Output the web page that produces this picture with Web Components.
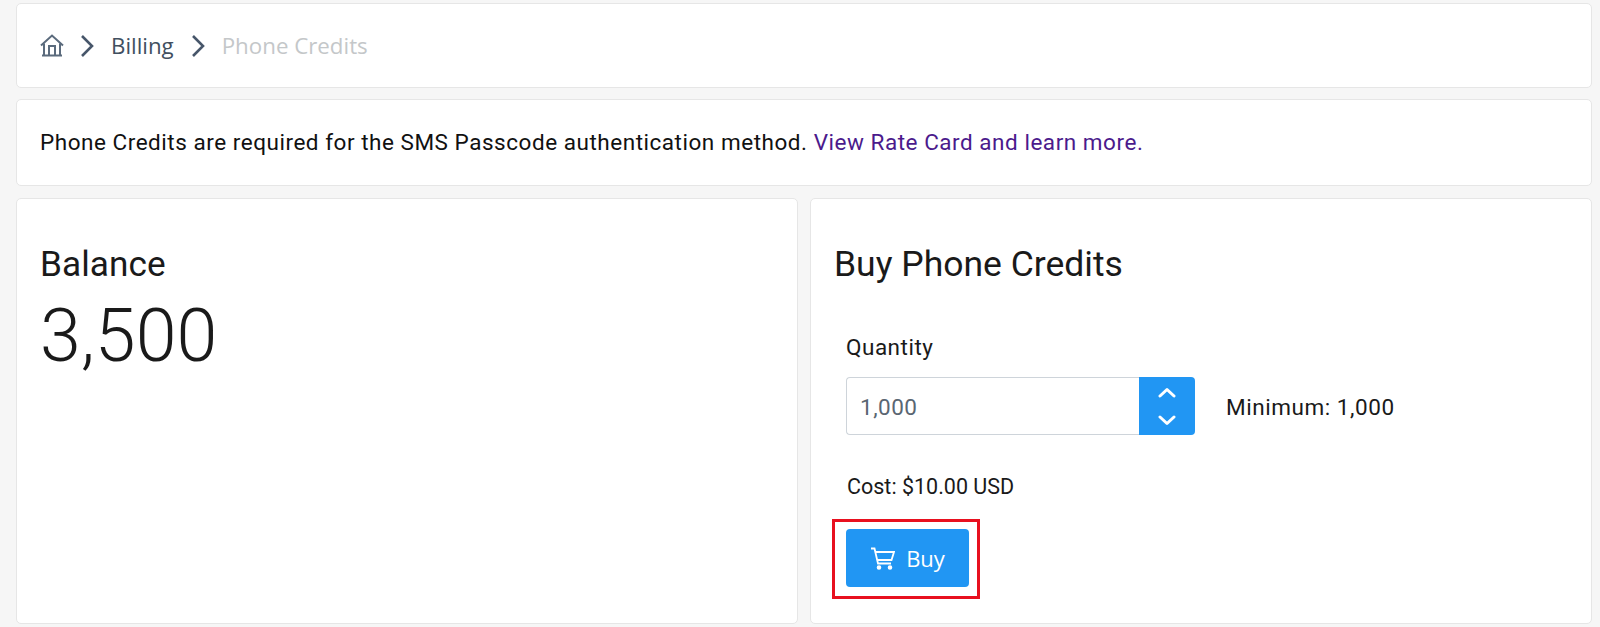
<!DOCTYPE html>
<html lang="en">
<head>
<meta charset="utf-8">
<title>Phone Credits</title>
<style>
  html, body { margin: 0; height: 100%; }
  body {
    background: #f6f6f6;
    color: #1a1a1a;
    font-family: Roboto, "Liberation Sans", sans-serif;
    overflow: hidden;
  }
  #page {
    display: grid;
    grid-template-columns: 782px 782px;
    column-gap: 12px;
    row-gap: 11px;
    grid-template-rows: 85px 87px 427px;
    padding: 3px 16px 0;
  }
  .wide { grid-column: 1 / -1; }
  .low { margin-top: 1px; }
</style>
</head>
<body>
<div id="page">
  <app-card class="wide" pad="0 24px">
    <bread-crumbs current="Phone Credits" parent="Billing"></bread-crumbs>
  </app-card>
  <app-card class="wide" pad="0 24px">
    <info-line>Phone Credits are required for the SMS Passcode authentication method. <a slot="link">View Rate Card and learn more.</a></info-line>
  </app-card>
  <app-card class="low" pad="45px 24px 0" align="start">
    <balance-panel amount="3,500"></balance-panel>
  </app-card>
  <app-card class="low" pad="45px 24px 0" align="start">
    <buy-panel></buy-panel>
  </app-card>
</div>

<script>
/**
 * Small helper, attaches an open shadow root with the given markup.
 *
 * @param {HTMLElement} el - The host.
 * @param {string} html - The shadow markup.
 */
const shadow = (el, html) => {
  el.attachShadow({ mode: 'open' }).innerHTML = html
}

customElements.define('app-card',
  class extends HTMLElement {
    connectedCallback () {
      const pad = this.getAttribute('pad') || '0'
      const align = this.getAttribute('align') || 'center'
      shadow(this, `
        <style>
          :host {
            display: flex;
            flex-direction: column;
            justify-content: ${align};
            box-sizing: border-box;
            padding: ${pad};
            background: #fff;
            border: 1px solid #e6e6e6;
            border-radius: 5px;
          }
        </style>
        <slot></slot>
      `)
    }
  }
)

customElements.define('bread-crumbs',
  class extends HTMLElement {
    connectedCallback () {
      const chevron = `<svg class="chev" width="14" height="24" viewBox="0 0 14 24"><path d="M2 2 L12 12 L2 22" fill="none" stroke="#47566a" stroke-width="2.6"/></svg>`
      shadow(this, `
        <style>
          :host {
            display: flex;
            align-items: center;
            font-family: "Open Sans", "Noto Sans", sans-serif;
            font-size: 22.3px;
            color: #414f60;
          }
          .home { margin: 0 16px 0 -1px; }
          .chev { margin-right: 17px; flex: none; }
          span { margin-right: 17px; }
          .current { color: #c4c7c9; }
        </style>
        <svg class="home" width="24" height="24" viewBox="0 0 24 24" fill="none" stroke="#5b6b7d" stroke-width="2">
          <path d="M1 11.5 L12 1.5 L23 11.5"/>
          <path d="M4 9.5 V21.5 M20 9.5 V21.5 M2 21.5 H22"/>
          <path d="M9 21.5 V12 H15 V21.5"/>
        </svg>
        ${chevron}
        <span>${this.getAttribute('parent')}</span>
        ${chevron}
        <span class="current">${this.getAttribute('current')}</span>
      `)
    }
  }
)

customElements.define('info-line',
  class extends HTMLElement {
    constructor () {
      super()
      shadow(this, `
        <style>
          :host {
            display: block;
            font-size: 22.5px;
            letter-spacing: 0.53px;
            color: #111;
            margin: 0 0 2px -1px;
          }
          ::slotted(a) { color: #4b1a8c; }
        </style>
        <slot></slot><slot name="link"></slot>
      `)
    }
  }
)

customElements.define('balance-panel',
  class extends HTMLElement {
    connectedCallback () {
      shadow(this, `
        <style>
          :host { display: block; margin-left: -1px; }
          h2 { margin: 0; font-size: 35.2px; font-weight: 400; line-height: 40px; letter-spacing: 0.05px; color: #1a1a1a; }
          div { font-size: 73.5px; font-weight: 300; line-height: 88px; margin-top: 8px; color: #1a1a1a; }
        </style>
        <h2>Balance</h2>
        <div>${this.getAttribute('amount')}</div>
      `)
    }
  }
)

customElements.define('quantity-input',
  class extends HTMLElement {
    constructor () {
      super()
      shadow(this, `
        <style>
          :host {
            display: flex;
            flex: none;
            width: 349px;
            height: 58px;
            box-sizing: border-box;
          }
          .value {
            flex: 1;
            box-sizing: border-box;
            border: 1px solid #ced4da;
            border-right: none;
            border-radius: 4px 0 0 4px;
            padding-left: 13px;
            font-size: 22.5px;
            letter-spacing: 0.5px;
            line-height: 58px;
            color: #5a6672;
          }
          .spin {
            flex: none;
            width: 56px;
            background: #2196f3;
            border-radius: 0 4px 4px 0;
            display: flex;
            flex-direction: column;
            align-items: center;
            justify-content: center;
            gap: 17px;
          }
        </style>
        <div class="value">1,000</div>
        <div class="spin">
          <svg width="18" height="11" viewBox="0 0 18 11"><path d="M2 9 L9 2.5 L16 9" fill="none" stroke="#fff" stroke-width="3" stroke-linecap="round" stroke-linejoin="round"/></svg>
          <svg width="18" height="11" viewBox="0 0 18 11"><path d="M2 2 L9 8.5 L16 2" fill="none" stroke="#fff" stroke-width="3" stroke-linecap="round" stroke-linejoin="round"/></svg>
        </div>
      `)
    }
  }
)

customElements.define('buy-button',
  class extends HTMLElement {
    constructor () {
      super()
      shadow(this, `
        <style>
          :host {
            display: inline-flex;
            align-items: center;
            justify-content: center;
            gap: 11px;
            box-sizing: border-box;
            width: 123px;
            height: 58px;
            background: #2196f3;
            border-radius: 4px;
            color: #fff;
            font-family: "Open Sans", "Noto Sans", sans-serif;
            font-size: 22px;
          }
        </style>
        <svg width="25" height="23" viewBox="0 0 25 23" fill="none" stroke="#fff" stroke-width="1.8">
          <path d="M1 1.5 H4.5 L8 16.5 H21"/>
          <path d="M5.3 5 H24 L21.5 13 H7"/>
          <circle cx="9" cy="20.5" r="1.4" fill="#fff"/>
          <circle cx="20" cy="20.5" r="1.4" fill="#fff"/>
        </svg>
        <slot></slot>
      `)
    }
  }
)

customElements.define('buy-panel',
  class extends HTMLElement {
    constructor () {
      super()
      shadow(this, `
        <style>
          :host { display: block; margin-left: -1px; }
          h2 { margin: 0; font-size: 35.5px; font-weight: 400; line-height: 40px; color: #1a1a1a; }
          .form { padding-left: 12px; margin-top: 49px; }
          label { display: block; font-size: 22.5px; letter-spacing: 0.5px; line-height: 28px; color: #1a1a1a; }
          .row { display: flex; align-items: center; gap: 31px; margin-top: 16px; font-size: 22.5px; letter-spacing: 0.55px; color: #1a1a1a; }
          .row span { padding-top: 2px; }
          .cost { margin: 39px 0 0 1px; font-size: 21.5px; line-height: 26px; color: #1a1a1a; }
          .mark {
            display: inline-block;
            margin: 19px 0 0 -14px;
            padding: 7px 8px 9px 11px;
            border: 3px solid #e8101f;
          }
          .mark buy-button { display: flex; }
        </style>
        <h2>Buy Phone Credits</h2>
        <div class="form">
          <label>Quantity</label>
          <div class="row">
            <quantity-input></quantity-input>
            <span>Minimum: 1,000</span>
          </div>
          <div class="cost">Cost: $10.00 USD</div>
          <div class="mark"><buy-button>Buy</buy-button></div>
        </div>
      `)
    }
  }
)
</script>
</body>
</html>
